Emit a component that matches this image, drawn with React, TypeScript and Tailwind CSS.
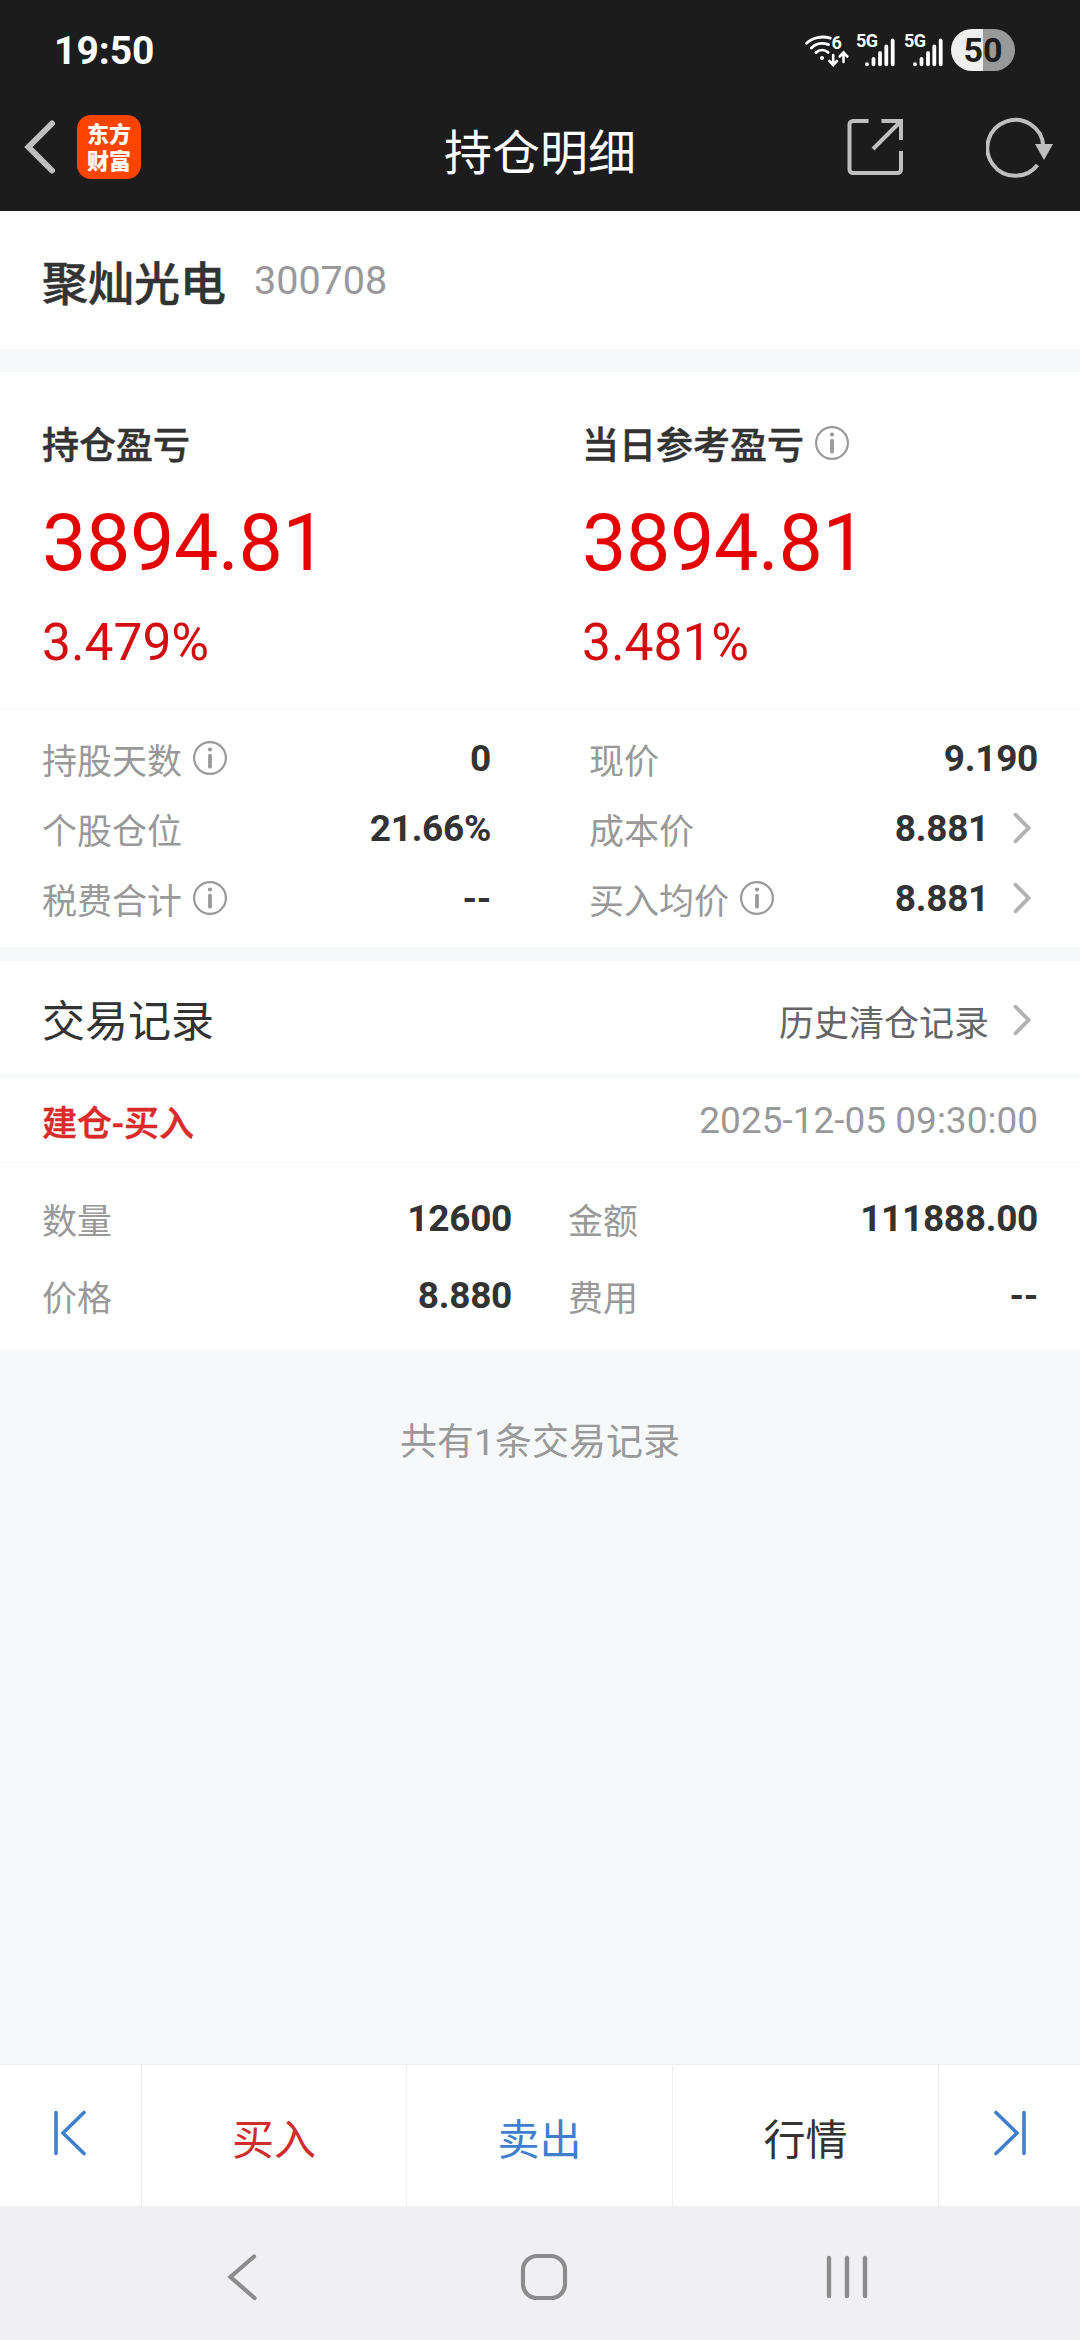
import type { ReactNode } from 'react';
import clsx from 'clsx';

const CJK = "font-['Noto_Sans_CJK_SC',sans-serif]";
const ROBOTO = "font-['Roboto','Noto_Sans_CJK_SC',sans-serif]";
// a bit heavier than medium, lighter than bold
const SEMI = 'font-medium [-webkit-text-stroke:0.5px_currentColor]';

function WifiIcon() {
  return (
    <svg className="overflow-visible" width="46" height="34" viewBox="0 0 46 34" fill="none" stroke="#fff" strokeWidth="2.8" strokeLinecap="round">
      <path d="M2.5 10.2C8.5 4.4 18 2.6 26.3 5.2" />
      <path d="M7.3 15C12 10.4 18.6 9.4 24.6 11.6" />
      <path d="M12 19.6c3.6-3.2 8.6-3.2 12.2-.2" />
      <circle cx="18" cy="25" r="2" fill="#fff" stroke="none" />
      <path d="M29.2 22v9M25.4 28l3.8 4 3.8-4M39.5 29v-9M35.7 23.5l3.8-4 3.8 4" strokeWidth="2.6" />
      <text x="27.5" y="15.6" fill="#fff" stroke="none" fontSize="18" fontWeight="700" fontFamily="Roboto, sans-serif">6</text>
    </svg>
  );
}

function SignalIcon() {
  return (
    <svg className="overflow-visible" width="40" height="34" viewBox="0 0 40 34" stroke="#fff" strokeWidth="3.8" strokeLinecap="round">
      <text x="0" y="14" fill="#fff" stroke="none" fontSize="18" fontWeight="700" fontFamily="Roboto, sans-serif" textLength="22">5G</text>
      <path d="M11 31.2v.1M17.5 26v5.3M24 19.8v11.5M30.3 13.4v17.9M36.7 7.4v23.9" fill="none" />
    </svg>
  );
}

function InfoIcon() {
  return (
    <svg width="34" height="34" viewBox="0 0 34 34" fill="none" stroke="#999">
      <circle cx="17" cy="17" r="15.9" strokeWidth="2.2" />
      <path d="M17 14.7v11" strokeWidth="3.8" strokeLinecap="round" />
      <circle cx="17" cy="8.5" r="2.1" fill="#999" stroke="none" />
    </svg>
  );
}

function ArrowRight() {
  return (
    <svg width="18" height="32" viewBox="0 0 18 32" fill="none" stroke="#b2b2b2" strokeWidth="3.8" strokeLinecap="round">
      <path d="M2.5 2.7L15.5 16 2.5 29.3" />
    </svg>
  );
}

function StatusBar() {
  return (
    <div className="flex h-[100px] items-center justify-between pl-[54px] pr-[65px]">
      <span className="mt-0.5 text-[39px] font-bold leading-none">19:50</span>
      <div className="flex items-center">
        <WifiIcon />
        <div className="ml-[6px] flex gap-2">
          <SignalIcon />
          <SignalIcon />
        </div>
        <div className="ml-[7px] flex h-[42px] w-16 items-center justify-center rounded-full bg-linear-to-r from-[#eee] from-50% to-[#999] to-50% text-[34px] font-bold leading-none text-[#1c1c1c]">
          50
        </div>
      </div>
    </div>
  );
}

function TitleBar() {
  return (
    <div className="grid h-[111px] grid-cols-[1fr_auto_1fr] px-6">
      <div className="flex items-start gap-[21px] pt-[15px]">
        <svg width="32" height="64" viewBox="0 0 32 64" fill="none" stroke="#bfbfbf" strokeWidth="6">
          <path d="M28 8.5L4.5 32 28 55.5" strokeLinecap="round" />
        </svg>
        <div className="h-16 w-16 rounded-[14px] bg-[#ff4400] pt-[6px] text-center text-[22px] font-black leading-[27px]">
          东方<br />财富
        </div>
      </div>
      <h1 className={clsx(CJK, 'pt-[25px] text-[48px] leading-[48px]')}>持仓明细</h1>
      <div className="mr-0.5 flex items-start justify-end gap-20 pt-[15px]">
        <svg width="60" height="64" viewBox="0 0 60 64" fill="none" stroke="#bfbfbf" strokeWidth="4">
          <path d="M22.5 6H7A3.5 3.5 0 0 0 3.5 9.5V54.5A3.5 3.5 0 0 0 7 58H51.5A3.5 3.5 0 0 0 55 54.5V36" />
          <path d="M35.5 6H55v19M54 7L27 34" />
        </svg>
        <svg width="68" height="64" viewBox="0 0 68 64" fill="none" stroke="#bfbfbf" strokeWidth="4">
          <path d="M51.5 50A28 28 0 1 1 57.3 31" />
          <path d="M49 29h18l-9 16z" fill="#bfbfbf" stroke="none" />
        </svg>
      </div>
    </div>
  );
}

function ProfitBlock({ label, amount, percent, info }: { label: string; amount: string; percent: string; info?: boolean }) {
  return (
    <div>
      <div className="flex h-[34px] items-center gap-[11px]">
        <span className={clsx(CJK, SEMI, 'text-[37px] leading-none')}>{label}</span>
        {info && <InfoIcon />}
      </div>
      <div className="mt-[43px] text-[79px] leading-[80px] tracking-[-0.4px] text-[#e60000]">{amount}</div>
      <div className="mt-[30px] text-[51.5px] leading-[60px] text-[#d40c0f]">{percent}</div>
    </div>
  );
}

interface FieldProps {
  label: string;
  value: string;
  info?: boolean;
  link?: boolean;
}

function Field({ label, value, info, link }: FieldProps) {
  return (
    <div className="flex items-center">
      <span className={clsx(CJK, 'text-[35px] leading-none text-[#999]')}>{label}</span>
      {info && <span className="ml-[11px]"><InfoIcon /></span>}
      <span className="ml-auto text-[37px] font-bold leading-none tracking-[-0.3px]">{value}</span>
      {link && <span className="ml-6 mr-[7px]"><ArrowRight /></span>}
    </div>
  );
}

function BottomCell({ children, className }: { children: ReactNode; className?: string }) {
  return (
    <button className={clsx(CJK, 'flex items-center justify-center border-r border-[#eee] pt-0.5 text-[42px] leading-none', className)}>
      {children}
    </button>
  );
}

const leftFields: FieldProps[] = [
  { label: '持股天数', value: '0', info: true },
  { label: '个股仓位', value: '21.66%' },
  { label: '税费合计', value: '--', info: true },
];

const rightFields: FieldProps[] = [
  { label: '现价', value: '9.190' },
  { label: '成本价', value: '8.881', link: true },
  { label: '买入均价', value: '8.881', info: true, link: true },
];

export default function App() {
  return (
    <div className={clsx(ROBOTO, 'flex h-[2340px] w-[1080px] flex-col bg-[#f7f8fa] text-[#333]')}>
      <header className="h-[211px] bg-[#1c1c1c] text-white">
        <StatusBar />
        <TitleBar />
      </header>

      <section className="flex h-[138px] items-center gap-[28px] bg-white pb-0.5 pl-[42px]">
        <h2 className={clsx(CJK, SEMI, 'mt-0.5 text-[46px] leading-none')}>聚灿光电</h2>
        <span className="mt-1 text-[39.5px] leading-none text-[#999]">300708</span>
      </section>

      <section className="mt-[23px] bg-white">
        <div className="grid h-[337px] grid-cols-2 border-b border-[#f3f4f6] pl-[42px] pt-[54px]">
          <ProfitBlock label="持仓盈亏" amount="3894.81" percent="3.479%" />
          <div className="pl-[21px]">
            <ProfitBlock label="当日参考盈亏" amount="3894.81" percent="3.481%" info />
          </div>
        </div>
        <div className="grid h-[238px] grid-cols-[449px_449px] justify-between px-[42px] pt-[14px]">
          <div className="grid h-[210px] grid-rows-3">
            {leftFields.map((field) => <Field key={field.label} {...field} />)}
          </div>
          <div className="grid h-[210px] grid-rows-3">
            {rightFields.map((field) => <Field key={field.label} {...field} />)}
          </div>
        </div>
      </section>

      <section className="mt-[14px] flex h-[113px] items-center bg-white pl-[42px] pr-[49px]">
        <h3 className={clsx(CJK, 'mt-0.5 text-[43px] leading-none')}>交易记录</h3>
        <span className={clsx(CJK, 'ml-auto mt-[6px] text-[35px] leading-none text-[#666]')}>历史清仓记录</span>
        <span className="ml-6 mt-[5px]"><ArrowRight /></span>
      </section>

      <section className="mt-1 bg-white">
        <div className="flex h-[85px] items-center justify-between border-b border-[#f3f4f6] px-[42px]">
          <span className={clsx(SEMI, 'mt-2 text-[35px] leading-none text-[#dc2a2a]')}>建仓-买入</span>
          <span className="text-[37px] leading-none text-[#999]">2025-12-05 09:30:00</span>
        </div>
        <div className="grid h-[187px] grid-cols-[470px_470px] grid-rows-[77px_77px] justify-between px-[42px] pt-[17px]">
          <Field label="数量" value="12600" />
          <Field label="金额" value="111888.00" />
          <Field label="价格" value="8.880" />
          <Field label="费用" value="--" />
        </div>
      </section>

      <p className="mt-[73px] text-center text-[37px] leading-[40px] text-[#999]">共有1条交易记录</p>

      <footer className="mt-auto">
        <div className="grid h-[142px] grid-cols-[142px_265px_266px_266px_141px] border-t border-[#eee] bg-white">
          <BottomCell>
            <svg className="-mt-2 mr-0.5" width="34" height="46" viewBox="0 0 34 46" fill="none" stroke="#3f7fce" strokeWidth="3.6" strokeLinecap="round">
              <path d="M3 2.5v41M31 2.5L10 23l21 20.5" />
            </svg>
          </BottomCell>
          <BottomCell className="text-[#d02d2d]">买入</BottomCell>
          <BottomCell className="text-[#3f7fce]">卖出</BottomCell>
          <BottomCell>行情</BottomCell>
          <BottomCell className="border-r-0">
            <svg className="-mt-2" width="34" height="46" viewBox="0 0 34 46" fill="none" stroke="#3f7fce" strokeWidth="3.6" strokeLinecap="round">
              <path d="M31 2.5v41M3 2.5L24 23 3 43.5" />
            </svg>
          </BottomCell>
        </div>
        <nav className="flex h-[134px] items-center justify-between bg-[#f0f0f2] pl-[226px] pr-[212px] pt-2">
          <svg width="32" height="48" viewBox="0 0 32 48" fill="none" stroke="#8c8c8c" strokeWidth="4.2" strokeLinecap="round">
            <path d="M28 3.5L4.500 24 28.5 45" />
          </svg>
          <svg className="ml-[3px]" width="48" height="48" viewBox="0 0 48 48" fill="none" stroke="#8c8c8c" strokeWidth="4.2">
            <rect x="3" y="3" width="42" height="42" rx="14" />
          </svg>
          <svg width="42" height="48" viewBox="0 0 42 48" fill="none" stroke="#8c8c8c" strokeWidth="4.4" strokeLinecap="round">
            <path d="M3 5v38M21 5v38M39 5v38" />
          </svg>
        </nav>
      </footer>
    </div>
  );
}
